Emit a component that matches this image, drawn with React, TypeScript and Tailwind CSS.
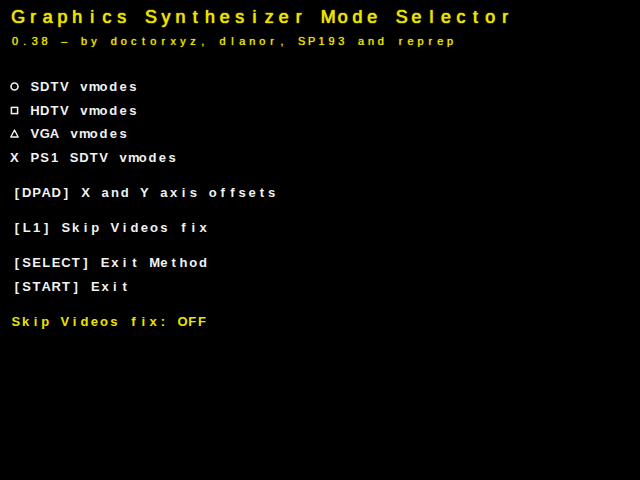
import React from "react";

// the console font draws every glyph in a fixed-width cell
const Mono = ({ text, cell = "w-[9.8px]" }) => (
  <>
    {Array.from(text).map((ch, i) => (
      <span key={i} className={`inline-block text-center ${cell}`}>
        {ch === " " ? "\u00a0" : ch}
      </span>
    ))}
  </>
);

const Circle = () => (
  <svg width="9" height="9" viewBox="0 0 9 9" className="block">
    <circle cx="4.5" cy="4.5" r="3.5" fill="none" stroke="#f2f2f2" strokeWidth="1.6" />
  </svg>
);

const Square = () => (
  <svg width="9" height="9" viewBox="0 0 9 9" className="block">
    <rect x="1.4" y="1.4" width="6.2" height="6.2" fill="none" stroke="#f2f2f2" strokeWidth="1.5" />
  </svg>
);

const Triangle = () => (
  <svg width="9" height="9" viewBox="0 0 9 9" className="block">
    <path d="M4.5 1 L8.2 8 L0.8 8 Z" fill="none" stroke="#f2f2f2" strokeWidth="1.4" strokeLinejoin="round" />
  </svg>
);

const modes = [
  { icon: <Circle />, label: "SDTV vmodes" },
  { icon: <Square />, label: "HDTV vmodes" },
  { icon: <Triangle />, label: "VGA vmodes" },
  { icon: <span className="text-[13px] leading-none">X</span>, label: "PS1 SDTV vmodes" },
];

const Row = ({ children, className = "" }) => (
  <div className={`h-[23.5px] leading-[23.5px] text-[13px] font-bold whitespace-nowrap ${className}`}>
    {children}
  </div>
);

const Spacer = () => <div className="h-[11.75px]" />;

export default function App() {
  return (
    <div
      className="w-[640px] h-[480px] bg-black text-[#f2f2f2] overflow-hidden"
      style={{ fontFamily: '"Liberation Sans", Arial, sans-serif' }}
    >
      <div className="flex flex-col pt-[8px]">
        <h1 className="pl-[11px] text-[18px] leading-[18px] text-[#ebe300] whitespace-nowrap [text-shadow:0_0_1px_currentColor,0_0_1px_currentColor]">
          <Mono text="Graphics Synthesizer Mode Selector" cell="w-[14.75px]" />
        </h1>
        <p className="mt-[10px] pl-[10px] text-[11px] leading-[11px] text-[#ebe300] whitespace-nowrap [text-shadow:0_0_1px_currentColor]">
          <Mono text="0.38 – by doctorxyz, dlanor, SP193 and reprep" cell="w-[9.9px]" />
        </p>

        <div className="mt-[28px] flex flex-col">
          {modes.map((m) => (
            <Row key={m.label} className="flex items-center pl-[10px]">
              <span className="w-[20px] flex items-center">{m.icon}</span>
              <span>
                <Mono text={m.label} />
              </span>
            </Row>
          ))}
          <Spacer />
          <Row className="pl-[12px]"><Mono text="[DPAD] X and Y axis offsets" /></Row>
          <Spacer />
          <Row className="pl-[12px]"><Mono text="[L1] Skip Videos fix" /></Row>
          <Spacer />
          <Row className="pl-[12px]"><Mono text="[SELECT] Exit Method" /></Row>
          <Row className="pl-[12px]"><Mono text="[START] Exit" /></Row>
          <Spacer />
          <Row className="pl-[11px] text-[#ebe300]"><Mono text="Skip Videos fix: OFF" /></Row>
        </div>
      </div>
    </div>
  );
}
